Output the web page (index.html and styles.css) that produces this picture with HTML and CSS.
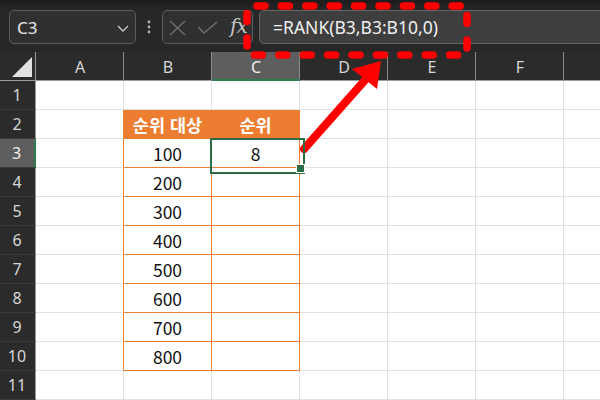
FILE: index.html
```html
<!DOCTYPE html>
<html lang="ko">
<head>
<meta charset="utf-8">
<title>RANK</title>
<link rel="stylesheet" href="styles.css">
</head>
<body>
<div class="app">
  <div class="toolbar">
    <div class="namebox">
      <span class="namebox-text">C3</span>
      <svg class="chevron" width="12" height="7" viewBox="0 0 12 7"><path d="M1 1 L6 6 L11 1" fill="none" stroke="#c8c8c8" stroke-width="1.4"/></svg>
    </div>
    <div class="dots">
      <svg width="4" height="14" viewBox="0 0 4 14"><circle cx="2" cy="2" r="1.4" fill="#b4b4b4"/><circle cx="2" cy="7" r="1.4" fill="#b4b4b4"/><circle cx="2" cy="12" r="1.4" fill="#b4b4b4"/></svg>
    </div>
    <div class="fxbox">
      <svg class="icon-x" width="17" height="16" viewBox="0 0 17 16"><path d="M1 1 L16 15 M16 1 L1 15" fill="none" stroke="#6e6e6e" stroke-width="1.5"/></svg>
      <svg class="icon-check" width="21" height="13" viewBox="0 0 21 13"><path d="M1 6 L7 12 L20 1" fill="none" stroke="#6e6e6e" stroke-width="1.5"/></svg>
      <span class="fx">fx</span>
    </div>
    <div class="formula">=RANK(B3,B3:B10,0)</div>
  </div>

  <div class="sheet">
    <div class="hd corner"><span class="tri"></span></div>
    <div class="hd col">A</div>
    <div class="hd col">B</div>
    <div class="hd col sel">C</div>
    <div class="hd col">D</div>
    <div class="hd col">E</div>
    <div class="hd col">F</div>
    <div class="hd col"></div>

    <div class="hd row">1</div>
    <div class="c"></div><div class="c"></div><div class="c"></div><div class="c"></div><div class="c"></div><div class="c"></div><div class="c"></div>

    <div class="hd row">2</div>
    <div class="c tl"></div><div class="c th">순위 대상</div><div class="c th">순위</div><div class="c"></div><div class="c"></div><div class="c"></div><div class="c"></div>

    <div class="hd row sel">3</div>
    <div class="c tl"></div><div class="c tc">100</div><div class="c tc active">8</div><div class="c"></div><div class="c"></div><div class="c"></div><div class="c"></div>

    <div class="hd row">4</div>
    <div class="c tl"></div><div class="c tc">200</div><div class="c tc"></div><div class="c"></div><div class="c"></div><div class="c"></div><div class="c"></div>

    <div class="hd row">5</div>
    <div class="c tl"></div><div class="c tc">300</div><div class="c tc"></div><div class="c"></div><div class="c"></div><div class="c"></div><div class="c"></div>

    <div class="hd row">6</div>
    <div class="c tl"></div><div class="c tc">400</div><div class="c tc"></div><div class="c"></div><div class="c"></div><div class="c"></div><div class="c"></div>

    <div class="hd row">7</div>
    <div class="c tl"></div><div class="c tc">500</div><div class="c tc"></div><div class="c"></div><div class="c"></div><div class="c"></div><div class="c"></div>

    <div class="hd row">8</div>
    <div class="c tl"></div><div class="c tc">600</div><div class="c tc"></div><div class="c"></div><div class="c"></div><div class="c"></div><div class="c"></div>

    <div class="hd row">9</div>
    <div class="c tl"></div><div class="c tc">700</div><div class="c tc"></div><div class="c"></div><div class="c"></div><div class="c"></div><div class="c"></div>

    <div class="hd row">10</div>
    <div class="c tl"></div><div class="c tc">800</div><div class="c tc"></div><div class="c"></div><div class="c"></div><div class="c"></div><div class="c"></div>

    <div class="hd row">11</div>
    <div class="c"></div><div class="c"></div><div class="c"></div><div class="c"></div><div class="c"></div><div class="c"></div><div class="c"></div>
  </div>

  <svg class="overlay" width="600" height="400" viewBox="0 0 600 400">
    <rect x="247" y="6" width="220" height="49" fill="none" stroke="#ff0000" stroke-width="7.5" stroke-linecap="round" stroke-dasharray="8 16.4" stroke-dashoffset="-10"/>
    <line x1="304" y1="149" x2="366" y2="79" stroke="#ff0000" stroke-width="8" stroke-linecap="round"/>
    <polygon points="381,61 352,69 377,89" fill="#ff0000"/>
  </svg>
</div>
</body>
</html>
```

FILE: styles.css
```css
* { box-sizing: border-box; }
html, body { margin: 0; padding: 0; }
body {
  width: 600px;
  height: 400px;
  overflow: hidden;
  background: #262626;
  font-family: "Noto Sans", "Noto Sans CJK KR", sans-serif;
}
.app {
  position: relative;
  width: 600px;
  height: 400px;
  overflow: hidden;
}
.toolbar {
  height: 52px;
  display: flex;
  align-items: flex-start;
  padding: 10px 0 0 9px;
  background: linear-gradient(#1c1c1c 0px, #232323 6px, #272727 12px, #272727 100%);
}
.namebox {
  width: 127px;
  height: 34px;
  border: 1px solid #5c5c5c;
  border-radius: 5px;
  background: #303030;
  display: flex;
  align-items: center;
  justify-content: space-between;
  padding: 0 6px 0 7px;
}
.namebox-text {
  color: #e6e6e6;
  font-size: 17px;
  line-height: 1;
  margin-top: 1px;
}
.chevron { margin-top: 2px; }
.dots {
  width: 26px;
  height: 34px;
  display: flex;
  align-items: center;
  justify-content: center;
}
.fxbox {
  width: 91px;
  height: 34px;
  border: 1px solid #5c5c5c;
  border-radius: 5px;
  background: #303030;
  display: flex;
  align-items: center;
  padding: 0 0 0 6px;
}
.icon-x { margin-top: 1px; }
.icon-check { margin-left: 11px; margin-top: 1px; }
.fx {
  margin-left: 12px;
  font-family: "DejaVu Serif", "Liberation Serif", serif;
  font-style: italic;
  font-size: 20px;
  color: #c4c4c4;
  line-height: 1;
  margin-top: -2px;
  letter-spacing: -1px;
}
.formula {
  flex: 1;
  margin-left: 6px;
  margin-right: -12px;
  height: 34px;
  border: 1px solid #666666;
  border-radius: 5px;
  background: #3e3e3e;
  color: #f0f0f0;
  font-size: 17.5px;
  line-height: 32px;
  padding-left: 13px;
  white-space: nowrap;
}

.sheet {
  display: grid;
  grid-template-columns: 36px repeat(7, 88px);
  grid-template-rows: 29px;
  grid-auto-rows: 29px;
  background: #ffffff;
}
.hd {
  background: #2b2b2b;
  color: #d6d6d6;
  display: flex;
  align-items: center;
  justify-content: center;
  font-size: 16px;
}
.corner {
  border-right: 1px solid #9a9a9a;
  border-bottom: 1px solid #9a9a9a;
  position: relative;
}
.tri {
  position: absolute;
  right: 3px;
  bottom: 3px;
  width: 0;
  height: 0;
  border-left: 20px solid transparent;
  border-bottom: 20px solid #e2e2e2;
}
.col {
  border-bottom: 1px solid #9a9a9a;
  box-shadow: inset -1px 0 0 #8a8a8a;
  padding-top: 2px;
}
.col.sel {
  background: #5e5e5e;
  color: #f0f0f0;
  border-bottom: 2px solid #2f7d4e;
}
.row {
  border-right: 1px solid #9a9a9a;
  border-bottom: 1px solid #3a3a3a;
  padding-right: 1px;
}
.row.sel {
  background: #5e5e5e;
  color: #f0f0f0;
  border-right: 2px solid #2f7d4e;
}
.c {
  border-right: 1px solid #e1e1e1;
  border-bottom: 1px solid #e1e1e1;
  font-family: "Noto Sans CJK KR", "Noto Sans", sans-serif;
  font-size: 17.5px;
  color: #111111;
  display: flex;
  align-items: center;
  justify-content: center;
}
.tl { border-right-color: #ed7d31; }
.th {
  background: #ed7d31;
  border-right-color: #ed7d31;
  border-bottom-color: #ed7d31;
  color: #ffffff;
  font-weight: 700;
}
.tc {
  border-right-color: #ed7d31;
  border-bottom-color: #ed7d31;
}
.active { position: relative; }
.active::before {
  content: "";
  position: absolute;
  left: -2px;
  top: -1px;
  width: 91px;
  height: 32px;
  border: 2px solid #2b6e46;
  z-index: 2;
}
.active::after {
  content: "";
  position: absolute;
  left: 84px;
  top: 25px;
  width: 7px;
  height: 7px;
  background: #2b6e46;
  border: 1px solid #ffffff;
  z-index: 3;
}
.overlay {
  position: absolute;
  left: 0;
  top: 0;
  pointer-events: none;
}
```
